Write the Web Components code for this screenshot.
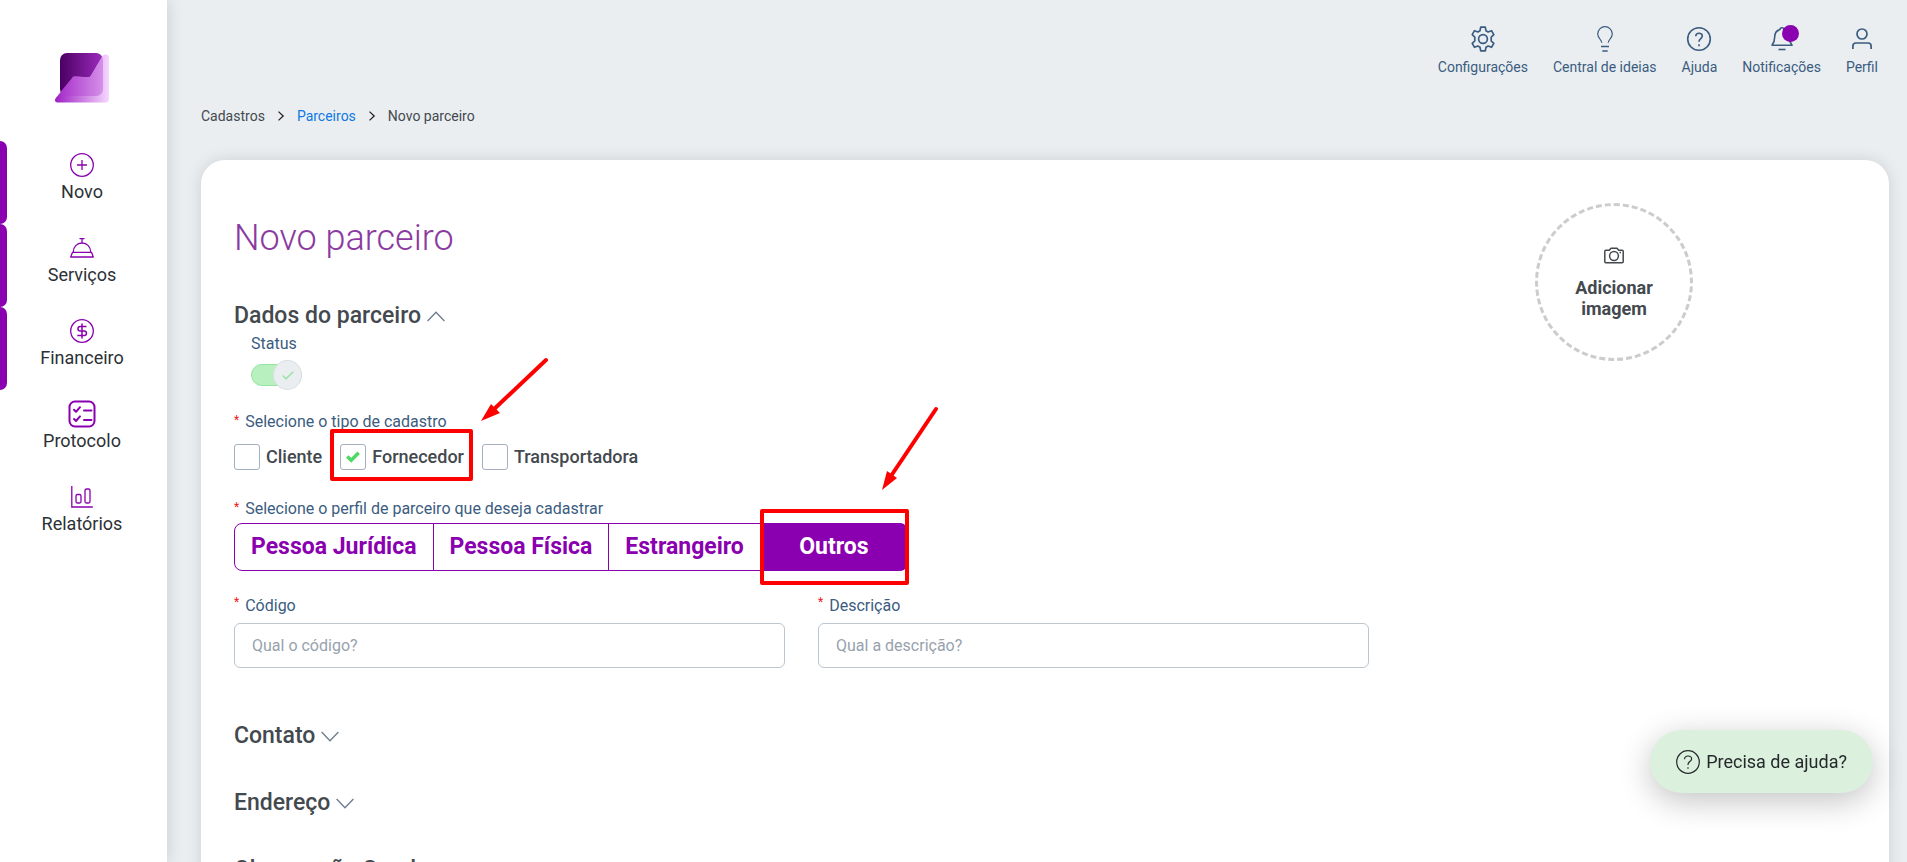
<!DOCTYPE html>
<html lang="pt-BR">
<head>
<meta charset="utf-8">
<title>Novo parceiro</title>
<style>
    :root {
        --brand: #8a00b0;
        --ink: #43494e;
        --label: #3b5c80;
        --canvas: #eaeef1;
    }

    html, body {
        height: 100%;
        margin: 0;
    }

    body {
        overflow: hidden;
        background: var(--canvas);
        color: var(--ink);
        font-family: Roboto, "Liberation Sans", sans-serif;
    }
</style>
</head>
<body>
<partner-app></partner-app>

<script>
// Icons shared by the elements, keyed by name.
const ICONS = {
    plus: `<svg width="24" height="24" viewBox="0 0 24 24" fill="none" stroke="currentColor"><circle cx="12" cy="12" r="11.3" stroke-width="1.3"/><path d="M12 7v10M7 12h10" stroke-width="1.3"/></svg>`,
    tray: `<svg width="24" height="24" viewBox="0 0 24 24" fill="none" stroke="currentColor" stroke-width="1.3"><path d="M9.5 2.6h5M12 2.6v4.2M3.2 16.4C3.2 11 7 7 12 7s8.8 4 8.8 9.4"/><path d="M2.4 16.4h19.2l1.7 4.6H.7z" stroke-linejoin="round"/></svg>`,
    money: `<svg width="24" height="24" viewBox="0 0 24 24" fill="none" stroke="currentColor" stroke-width="1.3"><circle cx="12" cy="12" r="11.3"/><path d="M12 4.5v15M16.5 7.5h-6.3a2.2 2.2 0 0 0 0 4.5h4a2.2 2.2 0 0 1 0 4.5H7.3" stroke-width="1.5"/></svg>`,
    checklist: `<svg width="28" height="28" viewBox="0 0 28 28" fill="none" stroke="currentColor" stroke-width="2" stroke-linecap="round" stroke-linejoin="round"><rect x="1.5" y="1.5" width="25" height="25" rx="5.5"/><path d="M6 9.8l2 2 4-4.6M6 19l2 2 4-4.6M16 10.5h7.5M16 20h7.5"/></svg>`,
    chart: `<svg width="24" height="24" viewBox="0 0 24 24" fill="none" stroke="currentColor" stroke-width="1.3"><path d="M1.8 1v21h21"/><rect x="6" y="9.5" width="5" height="8.5" rx="1.5"/><rect x="15" y="4" width="5" height="14" rx="1.5"/></svg>`,
    gear: `<svg width="26" height="26" viewBox="0 0 26 26" fill="none" stroke="currentColor" stroke-width="1.7" stroke-linejoin="round"><circle cx="13" cy="13" r="4.4"/><path d="M10.7 1.2h4.6l.7 3.6 2.1 1.2 3.4-1.3 2.3 4-2.6 2.4v3.8l2.6 2.4-2.3 4-3.4-1.3-2.1 1.2-.7 3.600h-4.600l-.7-3.600-2.100-1.200-3.400 1.300-2.300-4 2.600-2.400v-3.800L2.200 8.700l2.300-4L7.900 6 10 4.800z"/></svg>`,
    bulb: `<svg width="26" height="26" viewBox="0 0 26 26" fill="none" stroke="currentColor" stroke-width="1.2"><path d="M9.800 16.800C9.600 13.600 5.700 12 5.700 8a7.300 7.300 0 0 1 14.600 0c0 4-3.900 5.600-4.100 8.800"/><path d="M9 20.500h8M10.300 25h5.400" stroke-width="1.5"/></svg>`,
    help: `<svg width="26" height="26" viewBox="0 0 26 26" fill="none" stroke="currentColor" stroke-width="1.6"><circle cx="13" cy="13" r="11.3"/><path d="M9.7 10.3C9.8 8.3 11.2 7.2 13 7.2s3.3 1.1 3.3 2.9c0 2.4-3.3 2.6-3.3 5.600M13 18.300v1.900"/></svg>`,
    bell: `<svg width="26" height="26" viewBox="0 0 26 26" fill="none" stroke="currentColor" stroke-width="1.6" stroke-linejoin="round"><path d="M11 3.600c0-2.500 4-2.500 4 0 3.800 1 5.300 4 5.300 7.400 0 4.600.9 6 2.700 8.300H3c1.800-2.300 2.700-3.700 2.700-8.300 0-3.400 1.500-6.400 5.300-7.400z"/><path d="M9.500 23.500h7"/></svg>`,
    person: `<svg width="26" height="26" viewBox="0 0 26 26" fill="none" stroke="currentColor" stroke-width="1.7"><circle cx="13" cy="8" r="5"/><path d="M3.900 23v-3c0-1.800 1.200-3 3-3h12.200c1.800 0 3 1.200 3 3v3"/></svg>`,
    camera: `<svg width="20" height="17" viewBox="0 0 20 17" fill="none" stroke="currentColor" stroke-width="1.5" stroke-linejoin="round"><path d="M1.800 3.300h3.500L7 1.200h6l1.700 2.100h3.500c.6 0 1 .4 1 1v10.400c0 .6-.4 1-1 1H1.800c-.6 0-1-.4-1-1V4.300c0-.6.4-1 1-1z"/><circle cx="10" cy="9" r="4.400"/><path d="M15.500 5.400h1.500"/></svg>`,
    help_thin: `<svg width="24" height="24" viewBox="0 0 24 24" fill="none" stroke="currentColor" stroke-width="1.2"><circle cx="12" cy="12" r="11.3"/><path d="M8.500 9.200c0-2 1.500-3.200 3.500-3.200s3.600 1.200 3.600 3c0 2.600-3.600 2.600-3.600 5.400v.6M12 17.300v1.400"/></svg>`,
    chevron: `<svg width="18" height="11" viewBox="0 0 18 11" fill="none" stroke="#6b7c8f" stroke-width="1.3"><path d="M.6 1 9 9.800 17.400 1"/></svg>`,
    arrow: `<svg width="8" height="10" viewBox="0 0 8 10" fill="none" stroke="#222" stroke-width="1.3"><path d="M1.500.6 6.200 5 1.500 9.400"/></svg>`,
    logo: `<svg width="54" height="50" viewBox="0 0 54 50">
        <defs>
            <linearGradient id="back"><stop offset="0" stop-color="#4b0063"/><stop offset="1" stop-color="#9c2bbd"/></linearGradient>
            <linearGradient id="front"><stop offset="0" stop-color="#9d1fc4"/><stop offset="1" stop-color="#f6d8ff"/></linearGradient>
            <linearGradient id="overlap"><stop offset="0" stop-color="#a428c8"/><stop offset="1" stop-color="#da9dec"/></linearGradient>
            <clipPath id="tile"><rect x="5" y="0" width="43" height="43" rx="7"/></clipPath>
        </defs>
        <rect x="5" y="0" width="43" height="43" rx="7" fill="url(#back)"/>
        <path d="M47 4c1-2 2.300-2.400 3.800-2.400 2 0 3.200 1.200 3.200 3.200v41.500c0 2-1.200 3.300-3.200 3.300H2.600c-2.600 0-3.400-2.500-1.800-4.500L17 25.200c1-1.300 1.900-1.700 3.500-1.600l12.600.6c1.400 0 2-.4 2.900-1.800z" fill="url(#front)"/>
        <path d="M47 4c1-2 2.300-2.400 3.800-2.400 2 0 3.200 1.200 3.200 3.200v41.500c0 2-1.200 3.300-3.200 3.300H2.600c-2.600 0-3.400-2.500-1.800-4.500L17 25.200c1-1.300 1.900-1.700 3.500-1.600l12.600.6c1.400 0 2-.4 2.900-1.800z" fill="url(#overlap)" clip-path="url(#tile)"/>
    </svg>`
};

/** Sidebar entry: icon over a label, with an optional bar on the left edge. */
class SideItem extends HTMLElement {
    constructor() {
        super();
        this.attachShadow({ mode: "open" });
    }

    connectedCallback() {
        this.shadowRoot.innerHTML = `
        <style>
            :host {
                display: flex;
                height: 83px;
            }

            .bar {
                width: 7px;
                border-radius: 0 7px 7px 0;
            }

            :host([marked]) .bar {
                background: var(--brand);
            }

            a {
                display: flex;
                flex: 1;
                flex-direction: column;
                align-items: center;
                gap: 1px;
                padding: 10px 10px 0 0;
                color: #2c3136;
                font-size: 18px;
                line-height: 24px;
                text-decoration: none;
            }

            .icon {
                display: flex;
                align-items: center;
                justify-content: center;
                height: 28px;
                color: var(--brand);
            }
        </style>
        <span class="bar"></span>
        <a href="#"><span class="icon">${ICONS[this.getAttribute("icon")]}</span><slot></slot></a>
        `;
    }
}

/** Shortcut in the top bar. */
class TopLink extends HTMLElement {
    constructor() {
        super();
        this.attachShadow({ mode: "open" });
    }

    connectedCallback() {
        this.shadowRoot.innerHTML = `
        <style>
            :host {
                display: block;
            }

            a {
                display: flex;
                flex-direction: column;
                align-items: center;
                gap: 7px;
                color: var(--label);
                font-size: 14px;
                line-height: 16px;
                text-decoration: none;
            }

            .icon {
                position: relative;
                height: 26px;
            }

            .dot {
                display: none;
                position: absolute;
                top: -1px;
                left: 13px;
                width: 17px;
                height: 17px;
                border-radius: 50%;
                background: var(--brand);
            }

            :host([unread]) .dot {
                display: block;
            }
        </style>
        <a href="#"><span class="icon">${ICONS[this.getAttribute("icon")]}<span class="dot"></span></span><slot></slot></a>
        `;
    }
}

/** Breadcrumb trail. */
class BreadCrumbs extends HTMLElement {
    constructor() {
        super();
        this.attachShadow({ mode: "open" });
        this.shadowRoot.innerHTML = `
        <style>
            :host {
                display: block;
            }

            nav {
                display: flex;
                align-items: center;
                gap: 12px;
                font-size: 14px;
                line-height: 16px;
            }

            a {
                color: #0d78e3;
                text-decoration: none;
            }
        </style>
        <nav aria-label="Navegação">
            <span>Cadastros</span>${ICONS.arrow}<a href="#">Parceiros</a>${ICONS.arrow}<span>Novo parceiro</span>
        </nav>
        `;
    }
}

/** Collapsible section heading. */
class SectionTitle extends HTMLElement {
    constructor() {
        super();
        this.attachShadow({ mode: "open" });
        this.shadowRoot.innerHTML = `
        <style>
            :host {
                display: block;
            }

            h2 {
                margin: 0;
                font-size: 23px;
                font-weight: 500;
                line-height: 28px;
            }

            button {
                display: flex;
                align-items: center;
                gap: 6px;
                padding: 0;
                border: 0;
                background: none;
                color: inherit;
                font: inherit;
                cursor: pointer;
            }

            :host([open]) svg {
                transform: rotate(180deg);
            }
        </style>
        <h2><button type="button"><slot></slot>${ICONS.chevron}</button></h2>
        `;
        this.shadowRoot.querySelector("button").addEventListener("click", () => this.toggleAttribute("open"));
    }
}

/** Caption of a mandatory field, with its red mark. */
class RequiredMark extends HTMLElement {
    constructor() {
        super();
        this.attachShadow({ mode: "open" });
        this.shadowRoot.innerHTML = `
        <style>
            :host {
                display: flex;
                align-items: flex-start;
                gap: 6px;
                color: var(--label);
                font-size: 16px;
                line-height: 20px;
            }

            .mark {
                color: #f01818;
                font-size: 12px;
                line-height: var(--mark-line, 16px);
            }
        </style>
        <span class="mark">*</span><span><slot></slot></span>
        `;
    }
}

/** Square tick box with a bold caption. */
class TickOption extends HTMLElement {
    constructor() {
        super();
        this.attachShadow({ mode: "open" });
    }

    connectedCallback() {
        this.shadowRoot.innerHTML = `
        <style>
            :host {
                display: block;
            }

            label {
                display: flex;
                align-items: center;
                gap: 6px;
                font-size: 18px;
                font-weight: 500;
                line-height: 24px;
            }

            .box {
                display: grid;
                place-items: center;
            }

            input, svg {
                grid-area: 1 / 1;
            }

            input {
                appearance: none;
                box-sizing: border-box;
                width: 26px;
                height: 26px;
                margin: 0;
                border: 1px solid #a3b0c0;
                border-radius: 3px;
                background: #fff;
            }

            svg {
                visibility: hidden;
                pointer-events: none;
            }

            input:checked + svg {
                visibility: visible;
            }
        </style>
        <label>
            <span class="box">
                <input type="checkbox" ${this.hasAttribute("checked") ? "checked" : ""}>
                <svg width="14" height="12" viewBox="0 0 14 12" fill="none" stroke="#4cd964" stroke-width="3.4"><path d="M1.300 5.500 5.200 9.300 12.700 1.800"/></svg>
            </span>
            <slot></slot>
        </label>
        `;
    }
}

/** Disabled on/off switch. */
class StatusSwitch extends HTMLElement {
    constructor() {
        super();
        this.attachShadow({ mode: "open" });
        this.shadowRoot.innerHTML = `
        <style>
            :host {
                display: block;
                padding-left: 17px;
                color: var(--label);
                font-size: 16px;
                line-height: 20px;
            }

            label {
                display: flex;
                flex-direction: column;
                align-items: flex-start;
                gap: 6px;
            }

            .switch {
                display: grid;
                align-items: center;
                width: 51px;
            }

            .switch > * {
                grid-area: 1 / 1;
            }

            input {
                appearance: none;
                box-sizing: border-box;
                width: 51px;
                height: 22px;
                margin: 0;
                border: 1px solid #92e49e;
                border-radius: 11px;
                background: #b8f0c0;
            }

            .knob {
                box-sizing: border-box;
                display: grid;
                place-items: center;
                justify-self: end;
                width: 29px;
                height: 30px;
                border: 1px solid #d9dee3;
                border-radius: 50%;
                background: #eaeef1;
            }
        </style>
        <label>
            Status
            <span class="switch">
                <input type="checkbox" role="switch" checked disabled>
                <span class="knob"><svg width="12" height="9" viewBox="0 0 12 9" fill="none" stroke="#92e49e" stroke-width="1.3"><path d="M.8 4.500 4 7.800 11.300.7"/></svg></span>
            </span>
        </label>
        `;
    }
}

/** Joined row of profile buttons. */
class ProfilePicker extends HTMLElement {
    constructor() {
        super();
        this.attachShadow({ mode: "open" });
        this.shadowRoot.innerHTML = `
        <style>
            :host {
                display: flex;
            }

            button {
                height: 48px;
                margin-left: -1px;
                padding: 0 16px;
                border: 1px solid var(--brand);
                background: #fff;
                color: var(--brand);
                font: 700 23px/28px Roboto, "Liberation Sans", sans-serif;
                cursor: pointer;
            }

            button:first-of-type {
                margin-left: 0;
                border-radius: 8px 0 0 8px;
            }

            button:last-of-type {
                border-radius: 0 8px 8px 0;
            }

            button[aria-pressed="true"] {
                min-width: 148px;
                background: var(--brand);
                color: #fff;
            }
        </style>
        <button type="button" aria-pressed="false">Pessoa Jurídica</button>
        <button type="button" aria-pressed="false">Pessoa Física</button>
        <button type="button" aria-pressed="false">Estrangeiro</button>
        <button type="button" aria-pressed="true">Outros</button>
        `;
    }
}

/** Captioned text box. */
class TextField extends HTMLElement {
    constructor() {
        super();
        this.attachShadow({ mode: "open" });
    }

    connectedCallback() {
        this.shadowRoot.innerHTML = `
        <style>
            :host {
                display: block;
                --mark-line: 12px;
            }

            label {
                display: flex;
                flex-direction: column;
                gap: 7px;
            }

            input {
                box-sizing: border-box;
                width: 100%;
                height: 45px;
                padding: 0 17px;
                border: 1px solid #bcc6d0;
                border-radius: 6px;
                background: #fff;
                color: var(--ink);
                font: 400 16px/20px Roboto, "Liberation Sans", sans-serif;
            }

            input::placeholder {
                color: #97a2ad;
            }
        </style>
        <label>
            <required-mark>${this.getAttribute("label")}</required-mark>
            <input type="text" placeholder="${this.getAttribute("placeholder")}">
        </label>
        `;
    }
}

/** Round drop target for the partner picture. */
class ImageUpload extends HTMLElement {
    constructor() {
        super();
        this.attachShadow({ mode: "open" });
        this.shadowRoot.innerHTML = `
        <style>
            :host {
                display: block;
            }

            button {
                display: flex;
                flex-direction: column;
                align-items: center;
                justify-content: center;
                gap: 13px;
                width: 158px;
                height: 158px;
                padding: 2px 32px 0;
                border: 3px dashed #ccc;
                border-radius: 50%;
                background: none;
                color: var(--ink);
                font: 700 18px/21px Roboto, "Liberation Sans", sans-serif;
            }
        </style>
        <button type="button">${ICONS.camera}<span>Adicionar imagem</span></button>
        `;
    }
}

/** Floating help button. */
class HelpButton extends HTMLElement {
    constructor() {
        super();
        this.attachShadow({ mode: "open" });
        this.shadowRoot.innerHTML = `
        <style>
            :host {
                position: fixed;
                right: 34px;
                bottom: 69px;
            }

            button {
                display: flex;
                align-items: center;
                gap: 6px;
                height: 63px;
                padding: 0 26px;
                border: 0;
                border-radius: 32px;
                background: #dbf0dd;
                box-shadow: 0 8px 32px rgba(0, 0, 0, .24);
                color: #25292c;
                font: 400 18px/24px Roboto, "Liberation Sans", sans-serif;
            }
        </style>
        <button type="button">${ICONS.help_thin}<span>Precisa de ajuda?</span></button>
        `;
    }
}

/** Red frame and arrow that point at the slotted control. */
class CallOut extends HTMLElement {
    constructor() {
        super();
        this.attachShadow({ mode: "open" });
    }

    connectedCallback() {
        const [width, height] = this.getAttribute("size").split(" ");
        const [x, y, w, h] = this.getAttribute("frame").split(" ");
        this.shadowRoot.innerHTML = `
        <style>
            :host {
                display: block;
                position: relative;
            }

            svg {
                position: absolute;
                top: ${this.getAttribute("top")}px;
                left: ${this.getAttribute("left")}px;
                pointer-events: none;
            }
        </style>
        <slot></slot>
        <svg width="${width}" height="${height}" fill="none" stroke="red" stroke-width="4" stroke-linecap="round" stroke-linejoin="round">
            <rect x="${x}" y="${y}" width="${w}" height="${h}"/>
            <path d="${this.getAttribute("shaft")}"/>
            <path d="${this.getAttribute("head")}" fill="red" stroke="none"/>
        </svg>
        `;
    }
}

/** Page shell: sidebar, top bar and the partner form. */
class PartnerApp extends HTMLElement {
    constructor() {
        super();
        this.attachShadow({ mode: "open" });
        this.shadowRoot.innerHTML = `
        <style>
            :host {
                display: flex;
                height: 100%;
            }

            aside {
                z-index: 1;
                flex: 0 0 167px;
                background: #fff;
                box-shadow: 0 0 16px rgba(0, 0, 0, .15);
            }

            .logo {
                display: flex;
                justify-content: center;
                padding: 53px 3px 38px 0;
            }

            .page {
                flex: 1;
                min-width: 0;
                padding: 0 18px 0 34px;
                overflow-y: auto;
                scrollbar-width: none;
            }

            header {
                display: flex;
                justify-content: flex-end;
                gap: 25px;
                padding: 26px 11px 0 0;
            }

            bread-crumbs {
                padding: 33px 0 36px;
            }

            main {
                display: grid;
                grid-template-columns: 5fr 2fr;
                column-gap: 18px;
                padding: 0 48px 40px 33px;
                border-radius: 24px;
                background: #fff;
                box-shadow: 0 0 16px rgba(0, 0, 0, .12);
            }

            h1 {
                margin: 54px 0 40px;
                color: #8b3a9f;
                font-size: 36px;
                font-weight: 300;
                line-height: 48px;
            }

            status-switch {
                margin: 4px 0 22px;
            }

            .ticks {
                display: flex;
                gap: 18px;
                margin: 12px 0 29px;
            }

            .fields {
                display: grid;
                grid-template-columns: 1fr 1fr;
                gap: 33px;
                margin: 25px 0 54px;
            }

            profile-picker {
                margin-top: 4px;
            }

            call-out {
                width: fit-content;
            }

            .later {
                display: grid;
                gap: 39px;
            }

            .picture {
                display: flex;
                justify-content: center;
                align-items: flex-start;
                padding-top: 43px;
            }
        </style>
        <aside>
            <div class="logo">${ICONS.logo}</div>
            <nav>
                <side-item icon="plus" marked>Novo</side-item>
                <side-item icon="tray" marked>Serviços</side-item>
                <side-item icon="money" marked>Financeiro</side-item>
                <side-item icon="checklist">Protocolo</side-item>
                <side-item icon="chart">Relatórios</side-item>
            </nav>
        </aside>
        <div class="page">
            <header>
                <top-link icon="gear">Configurações</top-link>
                <top-link icon="bulb">Central de ideias</top-link>
                <top-link icon="help">Ajuda</top-link>
                <top-link icon="bell" unread>Notificações</top-link>
                <top-link icon="person">Perfil</top-link>
            </header>
            <bread-crumbs></bread-crumbs>
            <main>
                <form>
                    <h1>Novo parceiro</h1>
                    <section-title open>Dados do parceiro</section-title>
                    <status-switch></status-switch>
                    <required-mark>Selecione o tipo de cadastro</required-mark>
                    <div class="ticks">
                        <tick-option>Cliente</tick-option>
                        <call-out size="230 130" top="-90" left="-14" frame="6 77 139 48"
                            shaft="M220 6 165 58" head="M155 67 165 50 174 59Z">
                            <tick-option checked>Fornecedor</tick-option>
                        </call-out>
                        <tick-option>Transportadora</tick-option>
                    </div>
                    <required-mark>Selecione o perfil de parceiro que deseja cadastrar</required-mark>
                    <call-out size="200 190" top="-120" left="520" frame="8 108 145 72"
                        shaft="M182 6 137 73" head="M128 87 133 68 143 75Z">
                        <profile-picker></profile-picker>
                    </call-out>
                    <div class="fields">
                        <text-field label="Código" placeholder="Qual o código?"></text-field>
                        <text-field label="Descrição" placeholder="Qual a descrição?"></text-field>
                    </div>
                    <div class="later">
                        <section-title>Contato</section-title>
                        <section-title>Endereço</section-title>
                        <section-title>Observação Geral</section-title>
                    </div>
                </form>
                <div class="picture"><image-upload></image-upload></div>
            </main>
        </div>
        <help-button></help-button>
        `;
    }
}

customElements.define("side-item", SideItem);
customElements.define("top-link", TopLink);
customElements.define("bread-crumbs", BreadCrumbs);
customElements.define("section-title", SectionTitle);
customElements.define("required-mark", RequiredMark);
customElements.define("tick-option", TickOption);
customElements.define("status-switch", StatusSwitch);
customElements.define("profile-picker", ProfilePicker);
customElements.define("text-field", TextField);
customElements.define("image-upload", ImageUpload);
customElements.define("help-button", HelpButton);
customElements.define("call-out", CallOut);
customElements.define("partner-app", PartnerApp);
</script>
</body>
</html>
